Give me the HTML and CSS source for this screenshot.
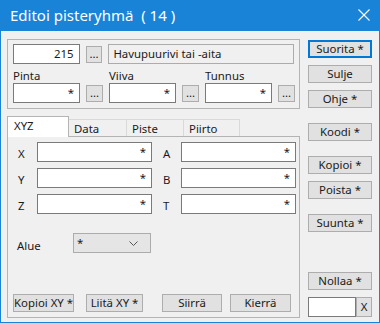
FILE: index.html
```html
<!DOCTYPE html>
<html lang="fi">
<head>
    <meta charset="UTF-8">
    <title>Editoi pisteryhmä</title>
    <link rel="stylesheet" href="styles.css">
</head>
<body>
    <div class="window">
        <div class="titlebar">
            <span class="title">Editoi pisteryhmä&nbsp; ( 14 )</span>
            <svg class="close" width="12" height="12" viewBox="0 0 12 12">
                <path d="M0.5 0.5 L11.5 11.5 M11.5 0.5 L0.5 11.5" stroke="#fff" stroke-width="1.1" fill="none"/>
            </svg>
        </div>
        <div class="client">
            <div class="main">
                <div class="groupbox">
                    <div class="top-row">
                        <div class="edit code-edit">215</div>
                        <div class="dots">...</div>
                        <div class="edit name-edit">Havupuurivi tai -aita</div>
                    </div>
                    <div class="code-row">
                        <div class="code">
                            <div class="code-label">Pinta</div>
                            <div class="pick">
                                <div class="edit code-edit">*</div>
                                <div class="dots">...</div>
                            </div>
                        </div>
                        <div class="code">
                            <div class="code-label">Viiva</div>
                            <div class="pick">
                                <div class="edit code-edit">*</div>
                                <div class="dots">...</div>
                            </div>
                        </div>
                        <div class="code">
                            <div class="code-label">Tunnus</div>
                            <div class="pick">
                                <div class="edit code-edit">*</div>
                                <div class="dots">...</div>
                            </div>
                        </div>
                    </div>
                </div>

                <div class="tabs">
                    <div class="tab active tab-xyz">XYZ</div>
                    <div class="tab tab-data">Data</div>
                    <div class="tab tab-piste">Piste</div>
                    <div class="tab tab-piirto">Piirto</div>
                </div>
                <div class="panel">
                    <div class="coords">
                        <div class="coord-label">X</div>
                        <div class="edit coord-edit">*</div>
                        <div class="coord-label second">A</div>
                        <div class="edit coord-edit">*</div>

                        <div class="coord-label">Y</div>
                        <div class="edit coord-edit">*</div>
                        <div class="coord-label second">B</div>
                        <div class="edit coord-edit">*</div>

                        <div class="coord-label">Z</div>
                        <div class="edit coord-edit">*</div>
                        <div class="coord-label second">T</div>
                        <div class="edit coord-edit">*</div>
                    </div>
                    <div class="area-row">
                        <div class="area-label">Alue</div>
                        <div class="combo">
                            <span>*</span>
                            <svg width="9" height="5" viewBox="0 0 9 5">
                                <path d="M0.5 0.5 L4.5 4.5 L8.5 0.5" stroke="#555" stroke-width="1" fill="none"/>
                            </svg>
                        </div>
                    </div>
                    <div class="panel-buttons">
                        <div class="btn copy-xy">Kopioi XY *</div>
                        <div class="btn paste-xy">Liitä XY *</div>
                        <div class="btn move">Siirrä</div>
                        <div class="btn rotate">Kierrä</div>
                    </div>
                </div>
            </div>

            <div class="side">
                <div class="btn default">Suorita *</div>
                <div class="btn">Sulje</div>
                <div class="btn">Ohje *</div>
                <div class="btn wide-gap">Koodi *</div>
                <div class="btn wide-gap">Kopioi *</div>
                <div class="btn">Poista *</div>
                <div class="btn wide-gap">Suunta *</div>
                <div class="btn reset">Nollaa *</div>
                <div class="clear-row">
                    <div class="edit clear-edit"></div>
                    <div class="btn clear-btn">X</div>
                </div>
            </div>
        </div>
    </div>
</body>
</html>
```

FILE: styles.css
```css
* {
    box-sizing: border-box;
}
body {
    margin: 0;
    font-family: "Noto Sans", "DejaVu Sans", sans-serif;
    font-size: 11.4px;
    color: #1a1a1a;
}
.window {
    width: 380px;
    height: 323px;
    border: 1px solid #1883d7;
    border-top: 0;
    background: #f0f0f0;
}
.titlebar {
    height: 31px;
    background: #1883d7;
    color: #fff;
    display: flex;
    align-items: center;
    justify-content: space-between;
    padding: 0 9px 1px 9px;
}
.title {
    font-size: 15px;
}
.client {
    display: flex;
    padding: 8px 6px 0 6px;
}
.main {
    width: 293px;
}
.groupbox {
    height: 70px;
    border: 1px solid #b4b4b4;
    padding: 4px 5px 0 5px;
}
.top-row {
    display: flex;
    align-items: center;
}
.edit {
    height: 20px;
    border: 1px solid #7a7a7a;
    background: #fff;
    text-align: right;
    padding: 0 5px;
    line-height: 18px;
    white-space: nowrap;
}
.code-edit {
    width: 67px;
}
.name-edit {
    width: 187px;
    text-align: left;
    background: #f0f0f0;
    border-color: #acacac;
    padding-left: 4px;
}
.dots {
    width: 17px;
    height: 17px;
    margin: 0 6px;
    border: 1px solid #adadad;
    background: #e1e1e1;
    text-align: center;
    line-height: 14px;
}
.code-row {
    display: flex;
    margin-top: 3px;
}
.code {
    width: 96px;
}
.code-label {
    height: 16px;
    line-height: 16px;
    padding-top: 1px;
}
.pick {
    display: flex;
    align-items: center;
}
.tabs {
    display: flex;
    align-items: flex-end;
    height: 20px;
    margin-top: 7px;
}
.tab {
    height: 17px;
    border: 1px solid #d9d9d9;
    border-bottom: 0;
    background: #f0f0f0;
    margin-left: -1px;
    padding-left: 5px;
    line-height: 17px;
}
.tab.active {
    height: 21px;
    margin-left: 0;
    margin-bottom: -1px;
    background: #fff;
    border-color: #b4b4b4;
    padding-left: 6px;
    line-height: 18px;
    position: relative;
}
.tab-xyz { width: 62px; }
.tab-data { width: 58px; border-left: 0; margin-left: 0; }
.tab-piste { width: 58px; }
.tab-piirto { width: 57px; }
.panel {
    height: 182px;
    border: 1px solid #b4b4b4;
    padding: 5px 3px 5px 10px;
    display: flex;
    flex-direction: column;
}
.coords {
    display: grid;
    grid-template-columns: 19px 115px 29px 115px;
    row-gap: 6px;
}
.coord-label {
    height: 20px;
    line-height: 16px;
    padding-top: 4px;
}
.coord-label.second {
    margin-left: 11px;
}
.coord-edit {
    width: 115px;
}
.area-row {
    display: flex;
    align-items: center;
    margin-top: 19px;
    margin-left: -1px;
}
.area-label {
    width: 56px;
    padding-top: 5px;
}
.combo {
    width: 78px;
    height: 20px;
    border: 1px solid #acacac;
    background: #e5e5e5;
    display: flex;
    align-items: center;
    justify-content: space-between;
    padding: 0 12px 0 3px;
    line-height: 18px;
}
.combo span {
    align-self: flex-start;
}
.panel-buttons {
    display: flex;
    margin-top: auto;
    margin-left: -5px;
}
.btn {
    height: 18px;
    border: 1px solid #adadad;
    background: #e1e1e1;
    text-align: center;
    line-height: 16px;
    white-space: nowrap;
}
.copy-xy { width: 61px; }
.paste-xy { width: 57px; margin-left: 12px; }
.move { width: 60px; margin-left: 19px; }
.rotate { width: 61px; margin-left: 8px; }
.side {
    width: 64px;
    margin-left: 8px;
    padding-top: 1px;
    display: flex;
    flex-direction: column;
    gap: 7px;
}
.btn.default {
    border: 2px solid #0078d7;
    line-height: 14px;
}
.wide-gap {
    margin-top: 8px;
}
.reset {
    margin-top: 33px;
}
.clear-row {
    display: flex;
    justify-content: space-between;
}
.clear-edit {
    width: 48px;
}
.clear-btn {
    width: 16px;
    height: 20px;
    line-height: 18px;
}
```
